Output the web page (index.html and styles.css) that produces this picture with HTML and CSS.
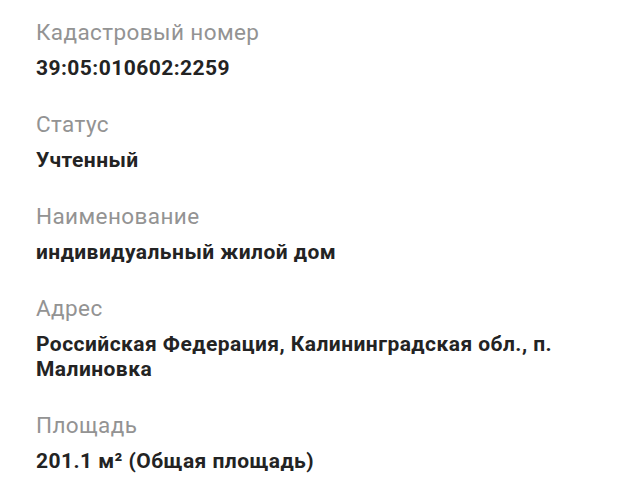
FILE: index.html
```html
<!DOCTYPE html>
<html lang="ru">
<head>
<meta charset="utf-8">
<link rel="stylesheet" href="styles.css">
</head>
<body>
<div class="card">
  <div class="field">
    <div class="label">Кадастровый номер</div>
    <div class="value">39:05:010602:2259</div>
  </div>
  <div class="field">
    <div class="label">Статус</div>
    <div class="value">Учтенный</div>
  </div>
  <div class="field">
    <div class="label">Наименование</div>
    <div class="value">индивидуальный жилой дом</div>
  </div>
  <div class="field">
    <div class="label">Адрес</div>
    <div class="value">Российская Федерация, Калининградская обл., п. Малиновка</div>
  </div>
  <div class="field">
    <div class="label">Площадь</div>
    <div class="value">201.1 м² (Общая площадь)</div>
  </div>
</div>
</body>
</html>
```
FILE: styles.css
```css
html, body {
  margin: 0;
  padding: 0;
  background: #ffffff;
}
.card {
  padding: 17px 40px 0 36px;
  display: flex;
  flex-direction: column;
  gap: 28px;
  font-family: Roboto, "Noto Sans", sans-serif;
}
.field {
  display: flex;
  flex-direction: column;
  gap: 9px;
}
.label {
  font-size: 22.5px;
  line-height: 30px;
  font-weight: 400;
  letter-spacing: 0.4px;
  color: #939393;
}
.value {
  font-size: 21px;
  line-height: 25px;
  font-weight: 700;
  letter-spacing: 0.45px;
  color: #232323;
}
```
